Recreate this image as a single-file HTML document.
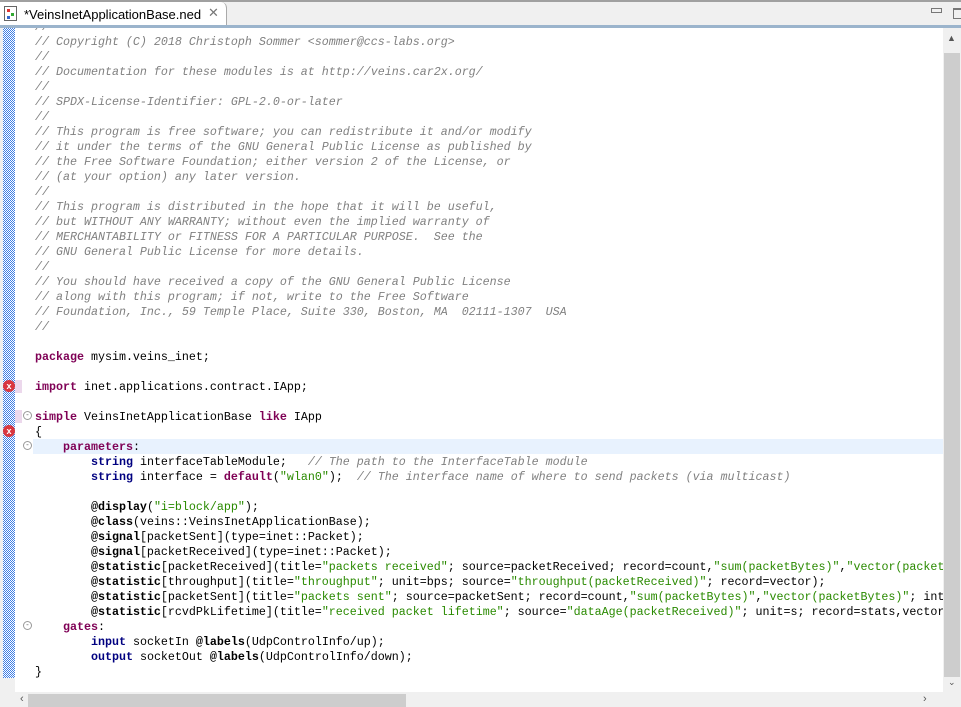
<!DOCTYPE html>
<html><head><meta charset="utf-8"><style>
body{margin:0;width:961px;height:707px;overflow:hidden;background:#f0f0f0;position:relative;font-family:"Liberation Sans",sans-serif}
#top{position:absolute;left:0;top:0;width:961px;height:2px;background:#a0a0a0}
#tab{position:absolute;left:0;top:2px;width:226px;height:24px;background:#fff;border-right:1px solid #aaa;border-radius:0 6px 0 0}
#tab span{position:absolute;left:24px;top:5px;font-size:13px;color:#000}
#line{position:absolute;left:0;top:25px;width:961px;height:3px;background:#9bb4cc}
#strip{position:absolute;left:3px;top:28px;width:12px;height:650px;background:repeating-conic-gradient(#3f7fe6 0 25%,#fff 0 50%);background-size:2px 2px}
#ed{position:absolute;left:15px;top:28px;width:928px;height:664px;background:#fff;overflow:hidden}
#hl{position:absolute;left:18px;top:411px;width:910px;height:15px;background:#e8f2fe}
pre{position:absolute;left:20px;top:-8px;margin:0;font-family:"Liberation Mono",monospace;font-size:11.67px;line-height:15px;color:#000}
.c{color:#808080;font-style:italic}
.k{color:#7f0055;font-weight:bold}
.t{color:#000080;font-weight:bold}
.s{color:#2a8a00}
.a{font-weight:bold}
#vs{position:absolute;left:943px;top:28px;width:18px;height:664px;background:#f0f0f0}
#vth{position:absolute;left:944px;top:53px;width:16px;height:624px;background:#cdcdcd}
#hs{position:absolute;left:15px;top:692px;width:928px;height:15px;background:#f0f0f0}
#hth{position:absolute;left:28px;top:694px;width:378px;height:13px;background:#cdcdcd}
.err{position:absolute;left:3px;width:12px;height:12px;border-radius:50%;background:#d9363e;color:#fff;font-size:9px;line-height:12px;text-align:center;font-weight:bold}
.fold{position:absolute;left:23px;width:7px;height:7px;border:1px solid #999;border-radius:50%;font-size:8px;line-height:6px;text-align:center;color:#666;background:#fff}
</style></head><body>
<div id="top"></div>
<div id="tab"><svg style="position:absolute;left:4px;top:4px" width="14" height="16"><rect x="0.5" y="0.5" width="12" height="14" fill="#fff" stroke="#666"/><rect x="3" y="3" width="3" height="3" fill="#d33"/><rect x="7" y="7" width="3" height="3" fill="#3a3"/><rect x="3" y="10" width="3" height="3" fill="#36c"/></svg><span>*VeinsInetApplicationBase.ned</span><span style="left:208px;top:3px;color:#777">✕</span></div>
<div style="position:absolute;left:931px;top:8px;width:9px;height:3px;border:1px solid #777"></div>
<div style="position:absolute;left:953px;top:8px;width:10px;height:8px;border:1px solid #777;border-top-width:2px"></div>
<div id="line"></div>
<div id="strip"></div>
<div id="ed">
<div id="hl"></div>
<pre><span class="c">//
// Copyright (C) 2018 Christoph Sommer &lt;sommer@ccs-labs.org&gt;
//
// Documentation for these modules is at http://veins.car2x.org/
//
// SPDX-License-Identifier: GPL-2.0-or-later
//
// This program is free software; you can redistribute it and/or modify
// it under the terms of the GNU General Public License as published by
// the Free Software Foundation; either version 2 of the License, or
// (at your option) any later version.
//
// This program is distributed in the hope that it will be useful,
// but WITHOUT ANY WARRANTY; without even the implied warranty of
// MERCHANTABILITY or FITNESS FOR A PARTICULAR PURPOSE.  See the
// GNU General Public License for more details.
//
// You should have received a copy of the GNU General Public License
// along with this program; if not, write to the Free Software
// Foundation, Inc., 59 Temple Place, Suite 330, Boston, MA  02111-1307  USA
//</span>

<span class="k">package</span> mysim.veins_inet;

<span class="k">import</span> inet.applications.contract.IApp;

<span class="k">simple</span> VeinsInetApplicationBase <span class="k">like</span> IApp
{
    <span class="k">parameters</span>:
        <span class="t">string</span> interfaceTableModule;   <span class="c">// The path to the InterfaceTable module</span>
        <span class="t">string</span> interface = <span class="k">default</span>(<span class="s">"wlan0"</span>);  <span class="c">// The interface name of where to send packets (via multicast)</span>

        <span class="a">@display</span>(<span class="s">"i=block/app"</span>);
        <span class="a">@class</span>(veins::VeinsInetApplicationBase);
        <span class="a">@signal</span>[packetSent](type=inet::Packet);
        <span class="a">@signal</span>[packetReceived](type=inet::Packet);
        <span class="a">@statistic</span>[packetReceived](title=<span class="s">"packets received"</span>; source=packetReceived; record=count,<span class="s">"sum(packetBytes)"</span>,<span class="s">"vector(packetBytes)"</span>);
        <span class="a">@statistic</span>[throughput](title=<span class="s">"throughput"</span>; unit=bps; source=<span class="s">"throughput(packetReceived)"</span>; record=vector);
        <span class="a">@statistic</span>[packetSent](title=<span class="s">"packets sent"</span>; source=packetSent; record=count,<span class="s">"sum(packetBytes)"</span>,<span class="s">"vector(packetBytes)"</span>; interpolationmode=none);
        <span class="a">@statistic</span>[rcvdPkLifetime](title=<span class="s">"received packet lifetime"</span>; source=<span class="s">"dataAge(packetReceived)"</span>; unit=s; record=stats,vector);
    <span class="k">gates</span>:
        <span class="t">input</span> socketIn <span class="a">@labels</span>(UdpControlInfo/up);
        <span class="t">output</span> socketOut <span class="a">@labels</span>(UdpControlInfo/down);
}</pre>
</div>
<div style="position:absolute;left:15px;top:380px;width:7px;height:13px;background:#ecd8ec"></div>
<div style="position:absolute;left:15px;top:410px;width:7px;height:13px;background:#ecd8ec"></div>
<div class="err" style="top:380px">x</div>
<div class="err" style="top:425px">x</div>
<div class="fold" style="top:411px">-</div>
<div class="fold" style="top:441px">-</div>
<div class="fold" style="top:621px">-</div>
<div id="vs"></div><div id="vth"></div>
<div style="position:absolute;left:947px;top:33px;font-size:9px;color:#555">▲</div>
<div style="position:absolute;left:948px;top:677px;font-size:9px;color:#555">⌄</div>
<div id="hs"></div><div id="hth"></div>
<div style="position:absolute;left:20px;top:693px;font-size:11px;color:#555">‹</div>
<div style="position:absolute;left:923px;top:693px;font-size:11px;color:#555">›</div>
</body></html>
